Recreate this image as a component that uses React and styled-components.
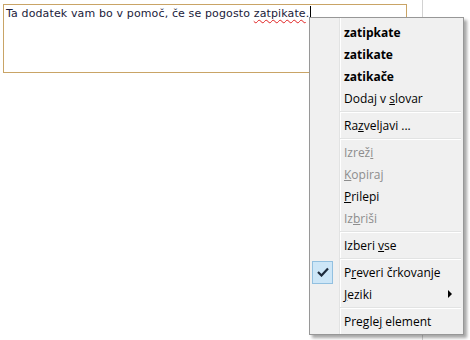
import React from 'react';
import styled, { createGlobalStyle } from 'styled-components';

const GlobalStyle = createGlobalStyle`
  body {
    margin: 0;
    background: #ffffff;
  }
`;

const items = [
  { label: 'zatipkate', bold: true },
  { label: 'zatikate', bold: true },
  { label: 'zatikače', bold: true },
  { label: 'Dodaj v slovar', key: 8 },
  { sep: true },
  { label: 'Razveljavi ...', key: 2 },
  { sep: true },
  { label: 'Izreži', key: 5, disabled: true },
  { label: 'Kopiraj', key: 0, disabled: true },
  { label: 'Prilepi', key: 0 },
  { label: 'Izbriši', key: 2, disabled: true },
  { sep: true },
  { label: 'Izberi vse', key: 7 },
  { sep: true },
  { label: 'Preveri črkovanje', key: 1, checked: true },
  { label: 'Jeziki', key: 0, submenu: true },
  { sep: true },
  { label: 'Preglej element', key: 6 },
];

function App() {
  return (
    <>
      <GlobalStyle />
      <Page>
        <Editor>
          Ta dodatek vam bo v pomoč, če se pogosto <Misspelled>zatpikate</Misspelled>.
          <Caret />
        </Editor>
        <PageEdge />
        <Menu>
          {items.map((item, i) =>
            item.sep ? (
              <Separator key={i} />
            ) : (
              <Item key={i} $bold={item.bold} $disabled={item.disabled}>
                <Gutter>
                  {item.checked && (
                    <CheckBox>
                      <svg width="12" height="10" viewBox="0 0 12 10">
                        <path d="M1 5 L4.5 8.5 L11 1.5" fill="none" stroke="#1e2b3c" strokeWidth="2.2" />
                      </svg>
                    </CheckBox>
                  )}
                </Gutter>
                <Label>
                  {item.key === undefined ? (
                    item.label
                  ) : (
                    <>
                      {item.label.slice(0, item.key)}
                      <u>{item.label[item.key]}</u>
                      {item.label.slice(item.key + 1)}
                    </>
                  )}
                </Label>
                {item.submenu && <Arrow />}
              </Item>
            )
          )}
        </Menu>
      </Page>
    </>
  );
}

const Page = styled.div`
  position: relative;
  display: flex;
  align-items: flex-start;
  width: 470px;
  height: 340px;
  overflow: hidden;
`;

const Editor = styled.div`
  box-sizing: border-box;
  width: 404px;
  height: 69px;
  margin: 4px 0 0 3px;
  padding: 1px 2px;
  border: 1px solid #c9a466;
  font-family: 'DejaVu Sans', Verdana, sans-serif;
  font-size: 11px;
  letter-spacing: 0.13px;
  line-height: 14px;
  color: #1b1b3a;
  white-space: nowrap;
`;

const Misspelled = styled.span`
  text-decoration: underline wavy #e02020;
  text-decoration-thickness: 1px;
  text-underline-offset: 2px;
`;

const Caret = styled.span`
  display: inline-block;
  width: 1px;
  height: 14px;
  margin-left: 1px;
  vertical-align: -3px;
  background: #000;
`;

const PageEdge = styled.div`
  align-self: stretch;
  width: 1px;
  margin-left: 15px;
  background: #d2d2d2;
`;

const Menu = styled.div`
  position: absolute;
  left: 309px;
  top: 17px;
  box-sizing: border-box;
  width: 155px;
  padding: 3px 2px 2px;
  background: #f0f0f0;
  border: 1px solid #979797;
  box-shadow: 3px 3px 3px rgba(0, 0, 0, 0.35);
  font-family: 'Open Sans', sans-serif;
  font-size: 12px;
  background-image: linear-gradient(
    to right,
    transparent 29px,
    #e2e3e3 29px,
    #e2e3e3 30px,
    #ffffff 30px,
    #ffffff 31px,
    transparent 31px
  );
`;

const Item = styled.div`
  display: flex;
  align-items: center;
  height: 22px;
  color: ${(p) => (p.$disabled ? '#8d8d8d' : '#000000')};
  font-weight: ${(p) => (p.$bold ? 700 : 400)};
`;

const Gutter = styled.div`
  display: flex;
  align-items: center;
  width: 26px;
  height: 22px;
  margin-right: 6px;
`;

const CheckBox = styled.div`
  box-sizing: border-box;
  display: flex;
  align-items: center;
  justify-content: center;
  width: 21px;
  height: 23px;
  background: #cde6f7;
  border: 1px solid #92c0e0;
`;

const Label = styled.span`
  flex: 1;
  white-space: nowrap;
`;

const Arrow = styled.span`
  width: 0;
  height: 0;
  margin-right: 9px;
  border-top: 4px solid transparent;
  border-bottom: 4px solid transparent;
  border-left: 4px solid #000;
`;

const Separator = styled.div`
  height: 1px;
  margin: 2px 0 1px 28px;
  background: #e2e3e3;
  border-bottom: 1px solid #ffffff;
`;

export default App;
